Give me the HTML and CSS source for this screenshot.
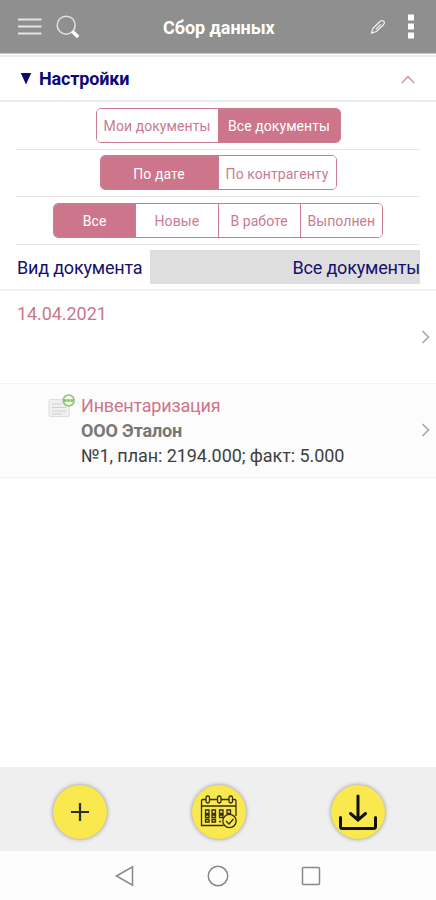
FILE: index.html
```
<!DOCTYPE html>
<html lang="ru">
<head>
<meta charset="utf-8">
<title>Сбор данных</title>
<link rel="stylesheet" href="styles.css">
</head>
<body>
<header class="topbar">
  <svg class="menu-icon" width="24" height="18" viewBox="0 0 24 18"><path d="M0 1.500h23.500M0 8.500h23.500M0 15.500h23.500"/></svg>
  <svg class="search-icon" width="24" height="24" viewBox="0 0 24 24"><circle cx="10.200" cy="10.200" r="9"/><path d="M16.200 16.200l6 5.800"/></svg>
  <h1><span class="title">Сбор данных</span></h1>
  <svg class="pencil-icon" width="16" height="16" viewBox="0 0 16 16"><path d="M1.500 14l1.300-4.500L9.300 3q2-2 4-1t.3 3.500L6.500 12.500zM5.700 10.300l5-5"/></svg>
  <svg class="more-icon" width="6" height="26" viewBox="0 0 6 26"><path d="M0 .5h6v6H0zM0 9.500h6v6H0zM0 18.500h6v6H0z"/></svg>
</header>
<main>
  <section class="settings-head">
    <svg width="12" height="12" viewBox="0 0 12 12"><path class="solid" d="M.8 0h10.400L6 11.500z"/></svg>
    <h2><span class="settings-title">Настройки</span></h2>
    <svg class="collapse" width="14" height="9" viewBox="0 0 14 9"><path d="M.8 8L7 1.500 13.200 8"/></svg>
  </section>
  <section class="filters">
    <div class="filter"><div class="segments owner"><button><span>Мои документы</span></button><button class="active"><span>Все документы</span></button></div></div>
    <div class="filter"><div class="segments group"><button class="active"><span>По дате</span></button><button><span>По контрагенту</span></button></div></div>
    <div class="filter"><div class="segments state"><button class="active"><span>Все</span></button><button><span>Новые</span></button><button><span>В работе</span></button><button><span>Выполнен</span></button></div></div>
  </section>
  <div class="kind"><label><span class="kind-label">Вид документа</span></label><div class="kind-value"><span class="kind-text">Все документы</span></div></div>
  <section class="date-row">
    <span class="date">14.04.2021</span>
    <svg class="chevron" width="9" height="16" viewBox="0 0 9 16"><path d="M1.500 2L7.500 8l-6 6"/></svg>
  </section>
  <article class="doc">
    <svg class="doc-icon" width="30" height="28" viewBox="0 0 30 28">
      <path class="paper" d="M3 5.500h18.500l1 15.500q0 1.500-1.500 1.500H3q-1 0-1-1.500V7q0-1.500 1-1.500z"/><path class="lines" d="M5 10h10M5 13.500h14M5 17h14M5 20h10"/>
      <circle class="badge" cx="21.700" cy="6.500" r="5.500"/><path class="badge-line" d="M17 6.500h9.500"/>
    </svg>
    <div class="doc-text">
      <div class="doc-kind"><span>Инвентаризация</span></div>
      <div class="doc-company"><span>ООО Эталон</span></div>
      <div class="doc-info"><span>№1, план: 2194.000; факт: 5.000</span></div>
    </div>
    <svg class="chevron" width="9" height="16" viewBox="0 0 9 16"><path d="M1.500 2L7.500 8l-6 6"/></svg>
  </article>
</main>
<footer class="actions">
  <button><svg width="54" height="54" viewBox="0 0 54 54"><path class="plus" d="M18 27h18M27 18v18"/></svg></button>
  <button><svg width="54" height="54" viewBox="0 0 54 54">
    <g class="calendar"><path d="M14 14.500h-3q-1.500 0-1.500 1.500V40.500h22M17.500 14.500h8M29 14.500h8M40.500 14.500h2q1.500 0 1.500 1.500V31M9.500 21h34.500"/>
    <rect x="14" y="11" width="3.500" height="7" rx="1.700"/><rect x="25.500" y="11" width="3.500" height="7" rx="1.700"/><rect x="37" y="11" width="3.500" height="7" rx="1.700"/>
    <path class="days" d="M13.500 25h3.500v3.500h-3.500zM20 25h3.500v3.500H20zM27.500 25H31v3.500h-3.500zM35 25h3.500v3.500H35zM13.500 30h3.500v2.500h-3.500zM20 30h3.500v2.500H20zM27.500 30H31v2.500h-3.500zM13.500 34.500h3.500v2.500h-3.500zM20 34.500h3.500v2.500H20zM27 36.500h2"/><circle class="check" cx="37.500" cy="36" r="6.700"/><path d="M34 36l3 3 4.500-5"/></g>
  </svg></button>
  <button><svg width="54" height="54" viewBox="0 0 54 54"><path class="download" d="M27 11v23M19.500 28.500L27 35l7.500-6.500M9.500 32.500v9q0 2 2 2h31q2 0 2-2v-9"/></svg></button>
</footer>
<nav class="system">
  <svg width="22" height="22" viewBox="0 0 22 22"><path d="M2.500 11L18.500 1.800v18.400z"/></svg>
  <svg width="22" height="22" viewBox="0 0 22 22"><circle cx="11" cy="11" r="9.700"/></svg>
  <svg width="22" height="22" viewBox="0 0 22 22"><rect x="2.500" y="2.500" width="17" height="17" rx="1"/></svg>
</nav>
</body>
</html>
```
FILE: styles.css
```
* { box-sizing: border-box; }
body { margin: 0; height: 900px; display: flex; flex-direction: column; overflow: hidden; background: #fff; font-family: Roboto, "Liberation Sans", sans-serif; }
h1, h2 { margin: 0; font-weight: 700; }
svg { display: block; flex: none; fill: none; }
span { white-space: nowrap; }
button { font-family: inherit; margin: 0; padding: 0; border: 0; }

.topbar { height: 53px; flex: none; display: flex; align-items: center; padding: 0 22px 0 18px; background: #8f8f8f; }
.topbar h1 { width: 111px; margin-left: 83px; padding-top: 2px; font-size: 18px; line-height: 24px; color: #fff; }
.title { letter-spacing: -.05px; }
.menu-icon { stroke: #e4e4e4; stroke-width: 2; }
.search-icon { margin-left: 14px; stroke: #e2e2e2; stroke-width: 1.500; }
.search-icon path { stroke: #fff; stroke-width: 3.500; }
.pencil-icon { margin-left: 96px; stroke: #f2f2f2; stroke-width: 1.200; }
.more-icon { margin-left: auto; fill: #fff; }

main { flex: 1; }
.settings-head { height: 49px; border-bottom: 2px solid #ececec; box-shadow: inset 0 1px #c8c8c8, inset 0 2px #fff, inset 0 4px #ececec; display: flex; align-items: center; padding: 5px 21px 0 20px; color: #0d0973; }
.settings-head h2 { margin-left: 7px; font-size: 18px; line-height: 24px; }
.settings-title { letter-spacing: -.15px; }
.solid { fill: #0d0973; }
.collapse { margin-left: auto; stroke: #d28b9c; stroke-width: 1.300; }

.filters { padding: 0 16px; }
.filter { height: 47.500px; display: flex; justify-content: center; align-items: center; border-bottom: 1px solid #e6e6e6; }
.segments { display: flex; height: 35px; border: 1px solid #cd7b8e; border-radius: 5px; overflow: hidden; }
.segments button { flex: 1; display: flex; justify-content: center; align-items: center; background: #fff; color: #ca7b8e; font-size: 14px; letter-spacing: .07px; padding-top: 2px; }
.segments button + button { border-left: 1px solid #cd7b8e; }
.segments .active { background: #cd758b; color: #fff; }
.owner { width: 245px; }
.group { width: 237px; }
.state { width: 330px; }

.kind { height: 46px; display: flex; align-items: center; padding: 0 16px 0 17px; border-bottom: 2px solid #f0f0f0; color: #15106f; font-size: 18px; letter-spacing: -.19px; }
.kind label { width: 133px; padding-top: 1px; }
.kind-value { flex: 1; height: 34px; display: flex; justify-content: flex-end; align-items: center; padding-top: 1px; background: #dedede; }

.date-row { height: 93px; display: flex; justify-content: space-between; align-items: center; padding: 0 6px 0 17px; border-bottom: 1px solid #f3f3f3; color: #cd758b; font-size: 18px; }
.date { align-self: flex-start; padding-top: 12px; line-height: 22px; letter-spacing: -.07px; }
.chevron { stroke: #aaa; stroke-width: 1.700; }
.doc { height: 94px; display: flex; align-items: center; padding: 0 6px 0 47px; background: #fcfcfc; border-bottom: 1px solid #f2f2f2; }
.doc-icon { align-self: flex-start; margin-top: 10px; }
.doc-text { margin-left: 4px; width: 300px; font-size: 18px; line-height: 25px; }
.doc .chevron { margin-left: auto; }
.doc-kind { color: #cd758b; letter-spacing: -.2px; }
.doc-company { color: #777; font-weight: 700; letter-spacing: -.15px; }
.doc-info { color: #3f3f3f; letter-spacing: -.07px; }
.paper { fill: #f0f0f0; stroke: #dedede; }
.lines { stroke: #cfcfcf; stroke-width: 1.200; }
.badge { fill: #f4faef; stroke: #83c95f; stroke-width: 1.500; }
.badge-line { stroke: #79bd50; stroke-width: 2.500; stroke-dasharray: 2.500 .8; }

.actions { height: 84px; flex: none; display: flex; justify-content: space-between; padding: 18px 51px 0 53px; background: #efefef; }
.actions button { width: 54px; height: 54px; border-radius: 50%; background: #f9e84e; box-shadow: 0 0 4px #8d8d8d; }
.plus { stroke: #302e1c; stroke-width: 2.200; }
.calendar { stroke: #342e19; stroke-width: 1.300; }
.check { fill: #f9e84e; }
.download { stroke: #111; stroke-width: 3; stroke-linecap: round; }
.system { height: 49px; flex: none; display: flex; justify-content: center; gap: 71px; align-items: center; background: #fdfdfd; }
.system svg { stroke: #888; stroke-width: 1.500; }
```
